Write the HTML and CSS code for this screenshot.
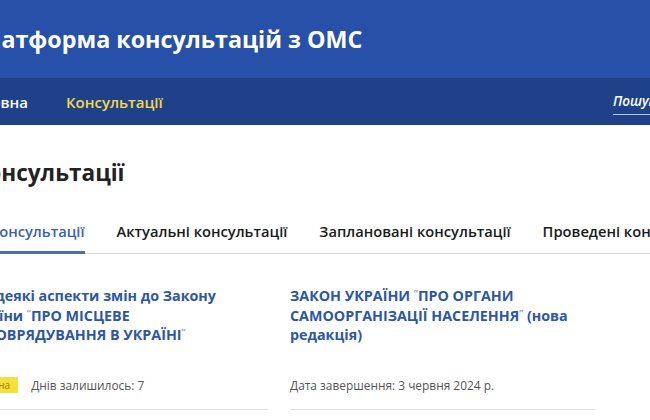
FILE: index.html
```html
<!DOCTYPE html>
<html lang="uk">
<head>
<meta charset="utf-8">
<title>Платформа консультацій з ОМС</title>
<link rel="stylesheet" href="styles.css">
</head>
<body>
<header class="top">
  <div class="wrap">
    <h1 class="brand">Платформа консультацій з ОМС</h1>
  </div>
</header>
<nav class="nav">
  <div class="wrap nav-in">
    <a class="nav-link" href="#">Головна</a>
    <a class="nav-link active" href="#">Консультації</a>
    <div class="search">Пошук</div>
  </div>
</nav>
<main class="wrap main">
  <h2 class="page-title">Консультації</h2>
  <div class="tabs">
    <a class="tab active" href="#">Всі консультації</a>
    <a class="tab" href="#">Актуальні консультації</a>
    <a class="tab" href="#">Заплановані консультації</a>
    <a class="tab" href="#">Проведені консультації</a>
  </div>
  <div class="cards">
    <article class="card">
      <a class="card-title" href="#">Про деякі аспекти змін до Закону України <span class="q">“</span>ПРО МІСЦЕВЕ САМОВРЯДУВАННЯ В УКРАЇНІ<span class="q">”</span></a>
      <div class="meta"><span class="badge">Активна</span><span class="meta-text">Днів залишилось: 7</span></div>
    </article>
    <article class="card">
      <a class="card-title" href="#">ЗАКОН УКРАЇНИ <span class="q">“</span>ПРО ОРГАНИ САМООРГАНІЗАЦІЇ НАСЕЛЕННЯ<span class="q">”</span> (нова редакція)</a>
      <div class="meta"><span class="meta-text">Дата завершення: 3 червня 2024 р.</span></div>
    </article>
  </div>
</main>
</body>
</html>
```
FILE: styles.css
```css
* { box-sizing: border-box; }
html, body { margin: 0; padding: 0; }
body {
  width: 650px;
  height: 420px;
  overflow: hidden;
  background: #fff;
  font-family: "Open Sans", "Noto Sans", sans-serif;
  color: #222;
}
a { text-decoration: none; color: inherit; }

.wrap {
  margin-left: -37px;
  width: 760px;
}

.top {
  background: #2751a8;
  height: 78px;
  display: flex;
  align-items: center;
}
.brand {
  margin: 0 0 0 6px;
  color: #fff;
  font-size: 23.3px;
  font-weight: 700;
  line-height: 1;
  padding-top: 2px;
}

.nav {
  background: #1f4189;
  height: 47px;
}
.nav-in {
  height: 100%;
  display: flex;
  align-items: center;
  padding-left: 2px;
}
.nav-link {
  color: #fff;
  font-size: 15px;
  font-weight: 600;
  margin-right: 38px;
}
.nav-link.active { color: #f6d84a; }
.search {
  margin-left: auto;
  margin-right: 23px;
  width: 87px;
  color: #fff;
  font-style: italic;
  font-weight: 600;
  font-size: 13.5px;
  padding-bottom: 4px;
  border-bottom: 1px solid #b8c4de;
  margin-top: 4px;
}

.main { padding-top: 33px; }
.page-title {
  margin: 0 0 0 9px;
  font-size: 22.6px;
  font-weight: 700;
  line-height: 30px;
  color: #222;
}

.tabs {
  display: flex;
  gap: 32px;
  margin-top: 28px;
  border-bottom: 1px solid #d6d6d6;
  padding-left: 3px;
}
.tab {
  font-size: 14.7px;
  font-weight: 600;
  color: #1a1a1a;
  padding: 5px 0 10px;
  margin-bottom: -1px;
  border-bottom: 3px solid transparent;
  white-space: nowrap;
}
.tab.active {
  color: #3b63ad;
  border-bottom-color: #4a6fb0;
}

.cards {
  display: flex;
  gap: 22px;
  margin-top: 32px;
}
.card {
  width: 305px;
  height: 124px;
  border-bottom: 1px solid #e2e2e2;
  display: flex;
  flex-direction: column;
}
.card-title {
  display: block;
  color: #2d57a6;
  font-size: 14.3px;
  font-weight: 700;
  line-height: 19.5px;
  padding-right: 10px;
}
.q {
  font-size: 9px;
  line-height: 0;
  position: relative;
  top: -5px;
  color: #8ea3cc;
}
.meta {
  margin-top: auto;
  margin-bottom: 16px;
  display: flex;
  align-items: center;
  gap: 13px;
}
.badge {
  background: #f7df3e;
  color: #a08000;
  font-size: 10px;
  line-height: 16px;
  padding: 0 8px 0 7px;
  border-radius: 1px;
}
.meta-text {
  font-size: 11.9px;
  color: #555;
}
```
